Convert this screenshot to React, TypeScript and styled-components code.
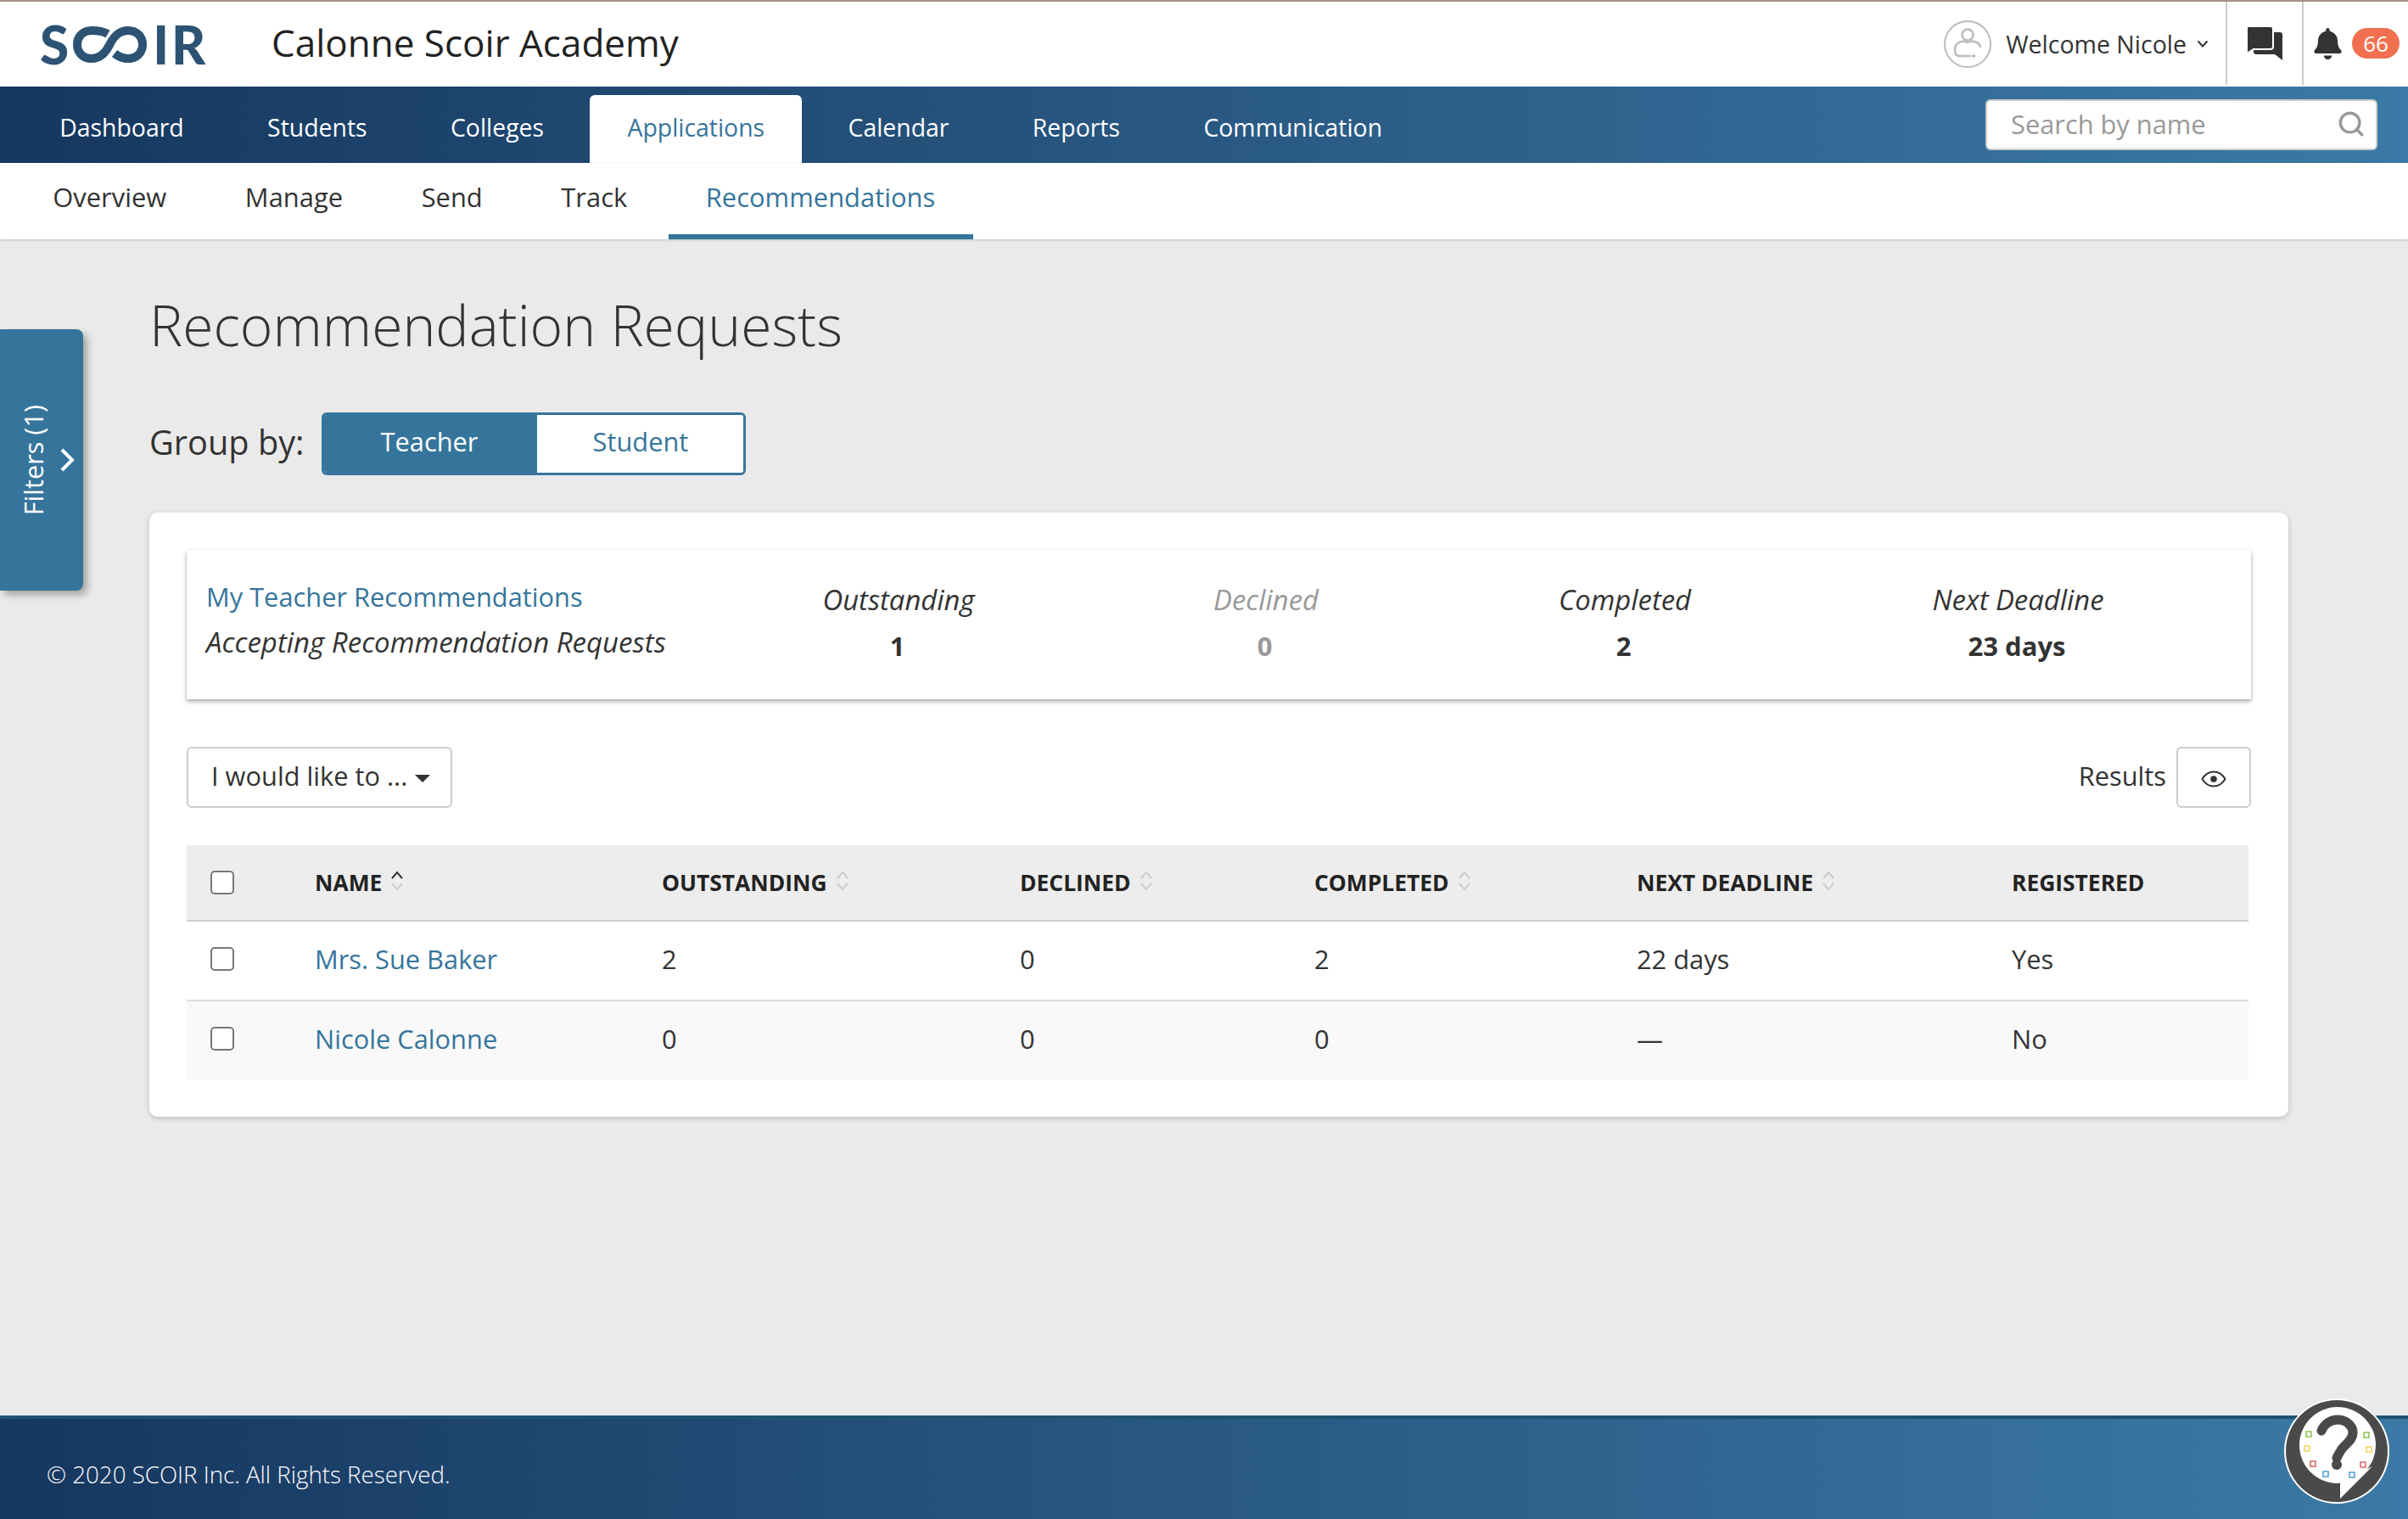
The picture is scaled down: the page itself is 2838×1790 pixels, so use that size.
import React from "react";
import styled, { createGlobalStyle } from "styled-components";
import { FaBell } from "react-icons/fa";
import { Search } from "lucide-react";

const blue = "#36759b";
const ink = "#333";
const tableColumns = "151px 409px 422px 347px 380px 442px 1fr";

const GlobalStyle = createGlobalStyle`
  html, body {
    margin: 0;
    padding: 0;
    background: #eaeaea;
    color: ${ink};
    font-family: "Open Sans", "Noto Sans", sans-serif;
  }
  * {
    box-sizing: border-box;
  }
`;

const Page = styled.div`
  position: relative;
  display: flex;
  flex-direction: column;
  min-height: 1790px;
`;

const TopBar = styled.header`
  display: flex;
  align-items: stretch;
  height: 102px;
  background: #fff;
  border-top: 2px solid #a88f8b;
`;

const Brand = styled.div`
  display: flex;
  align-items: center;
  gap: 2px;
  width: 320px;
  padding-left: 47px;
  color: #2c5374;
  font-family: "Lato", sans-serif;
  font-size: 62px;
  font-weight: 900;
  line-height: 1;
  letter-spacing: 3px;
`;

const BrandInfinity = styled.svg`
  width: 87px;
  height: 43px;
  margin-right: 5px;
`;

const SchoolName = styled.div`
  flex: 1;
  align-self: center;
  padding-bottom: 4px;
  font-size: 44px;
  color: #222;
`;

const UserMenu = styled.div`
  display: flex;
  align-items: center;
  padding-right: 20px;
  font-size: 28.5px;
`;

const AvatarSvg = styled.svg`
  margin-right: 17px;
`;

const ChevronSvg = styled.svg`
  margin-left: 12px;
`;

const IconCell = styled.div`
  display: flex;
  align-items: center;
  height: 98px;
  border-left: 2px solid #ccc;
  padding-left: 22px;
  width: 90px;
`;

const BellCell = styled(IconCell)`
  width: 125px;
  padding-left: 10px;
  gap: 10px;
  font-size: 37px;
`;

const Badge = styled.span`
  display: flex;
  align-items: center;
  justify-content: center;
  width: 56px;
  height: 36px;
  border-radius: 18px;
  background: #f0704f;
  color: #fff;
  font-size: 26px;
`;

const MainNav = styled.nav`
  display: flex;
  align-items: flex-end;
  justify-content: space-between;
  height: 90px;
  padding-left: 21px;
  padding-right: 36px;
  background: linear-gradient(90deg, #16375f 0%, #3b7aa6 100%);
`;

const MainTabs = styled.div`
  display: flex;
  align-items: flex-end;
`;

const MainTab = styled.a<{ $active?: boolean }>`
  display: flex;
  align-items: center;
  height: 80px;
  margin: 0 5px;
  padding: 0 44.2px 5px;
  border-radius: 6px 6px 0 0;
  font-size: 28.4px;
  color: ${(p) => (p.$active ? blue : "#fff")};
  background: ${(p) => (p.$active ? "#fff" : "transparent")};
`;

const SearchBox = styled.div`
  display: flex;
  align-items: center;
  justify-content: space-between;
  align-self: center;
  width: 462px;
  height: 60px;
  padding: 0 12px 2px 28px;
  background: #fff;
  border: 2px solid #ccc;
  border-radius: 6px;
  color: #999;
  font-size: 30.8px;
`;

const SubNav = styled.nav`
  display: flex;
  height: 90px;
  padding-left: 16px;
  background: #fff;
  box-shadow: 0 1px 3px rgba(0, 0, 0, 0.18);
`;

const SubTab = styled.a<{ $active?: boolean }>`
  display: flex;
  align-items: center;
  margin: 0 2px;
  padding: 0 44.3px 10px;
  font-size: 30.9px;
  color: ${(p) => (p.$active ? blue : ink)};
  border-bottom: 6px solid ${(p) => (p.$active ? blue : "transparent")};
  border-top: 6px solid transparent;
`;

const FilterTab = styled.button`
  position: absolute;
  left: 0;
  top: 388px;
  display: flex;
  align-items: center;
  justify-content: flex-start;
  gap: 14px;
  width: 98px;
  height: 308px;
  padding: 0 0 0 22px;
  border: none;
  border-radius: 0 8px 8px 0;
  background: ${blue};
  color: #fff;
  font-family: inherit;
  font-size: 30.7px;
  box-shadow: 5px 5px 8px rgba(0, 0, 0, 0.3);
`;

const FilterLabel = styled.span`
  writing-mode: vertical-rl;
  transform: rotate(180deg);
  line-height: 34px;
`;

const Main = styled.main`
  flex: 1;
  padding: 0 141px 44px 176px;
`;

const Title = styled.h1`
  margin: 53px 0 0;
  font-size: 66px;
  font-weight: 300;
  line-height: 94px;
  color: ${ink};
`;

const GroupRow = styled.div`
  display: flex;
  align-items: center;
  gap: 21px;
  margin-top: 57px;
  font-size: 39.7px;
`;

const GroupLabel = styled.span`
  padding-bottom: 5px;
`;

const Toggle = styled.div`
  display: flex;
  width: 500px;
  height: 74px;
  border: 3px solid ${blue};
  border-radius: 6px;
  overflow: hidden;
  background: #fff;
`;

const ToggleOption = styled.div<{ $active?: boolean }>`
  display: flex;
  align-items: center;
  justify-content: center;
  padding: 0 ${(p) => (p.$active ? "4px" : "0")} 6px 0;
  width: ${(p) => (p.$active ? "251px" : "243px")};
  font-size: 30.8px;
  color: ${(p) => (p.$active ? "#fff" : blue)};
  background: ${(p) => (p.$active ? blue : "#fff")};
`;

const Card = styled.section`
  margin-top: 44px;
  padding: 44px;
  background: #fff;
  border-radius: 10px;
  box-shadow: 0 2px 6px rgba(0, 0, 0, 0.2);
`;

const Summary = styled.div`
  display: grid;
  grid-template-columns: 640px 398px 468px 378px 1fr;
  align-items: center;
  height: 176px;
  box-shadow: 0 3px 5px rgba(0, 0, 0, 0.3), 0 0 3px rgba(0, 0, 0, 0.1);
`;

const SummaryLead = styled.div`
  padding-left: 23px;
  padding-bottom: 13px;
  font-size: 30.8px;
`;

const SummaryLink = styled.div`
  color: ${blue};
  line-height: 54px;
`;

const SummaryNote = styled.div`
  font-style: italic;
  line-height: 54px;
  font-size: 33px;
`;

const Stat = styled.div<{ $muted?: boolean }>`
  padding-bottom: 7px;
  text-align: center;
  color: ${(p) => (p.$muted ? "#999" : ink)};
`;

const StatLabel = styled.div`
  font-size: 32.8px;
  font-style: italic;
  line-height: 56px;
`;

const StatValue = styled.div`
  font-size: 31px;
  font-weight: 700;
  line-height: 52px;
`;

const StatValueText = styled.span`
  margin-right: 3px;
`;

const Toolbar = styled.div`
  display: flex;
  align-items: center;
  justify-content: space-between;
  margin-top: 56px;
`;

const ToolButton = styled.button`
  display: flex;
  align-items: center;
  justify-content: center;
  height: 72px;
  padding: 0 24px 5px 27px;
  background: #fff;
  border: 2px solid #ccc;
  border-radius: 6px;
  color: ${ink};
  font-family: inherit;
  font-size: 30.8px;
`;

const Caret = styled.span`
  display: inline-block;
  margin-left: 9px;
  margin-top: 8px;
  border-left: 9px solid transparent;
  border-right: 9px solid transparent;
  border-top: 9px solid ${ink};
`;

const ResultsGroup = styled.div`
  display: flex;
  align-items: center;
  gap: 12px;
  font-size: 30.8px;
`;

const ResultsText = styled.span`
  padding-bottom: 4px;
`;

const EyeButton = styled(ToolButton)`
  width: 88px;
  padding: 4px 0 0;
`;

const Table = styled.div`
  margin-top: 44px;
  width: 2430px;
`;

const Row = styled.div<{ $shade?: boolean }>`
  display: grid;
  grid-template-columns: ${tableColumns};
  align-items: center;
  height: 94px;
  padding-bottom: 4px;
  border-bottom: 2px solid #ddd;
  font-size: 30.8px;
  background: ${(p) => (p.$shade ? "#f9f9f9" : "#fff")};
  &:last-child {
    height: 92px;
    border-bottom: none;
  }
`;

const HeadRow = styled(Row)`
  height: 90px;
  padding-bottom: 0;
  background: #ededed;
  border-bottom: 2px solid #ccc;
  font-size: 26.4px;
  font-weight: 700;
  color: #222;
`;

const HeadCell = styled.div`
  display: flex;
  align-items: center;
  gap: 10px;
`;

const Box = styled.span`
  display: block;
  width: 28px;
  height: 28px;
  margin-left: 28px;
  background: #fff;
  border: 2px solid #777;
  border-radius: 5px;
`;

const NameLink = styled.a`
  color: ${blue};
`;

const SortSvg = styled.svg`
  width: 16px;
  height: 24px;
  margin-top: -4px;
`;

const Footer = styled.footer`
  display: flex;
  align-items: center;
  height: 122px;
  padding: 12px 0 0 55px;
  border-top: 4px solid #1f5270;
  background: linear-gradient(90deg, #16375f 0%, #3b7aa6 100%);
  color: #fff;
  font-size: 27.7px;
  font-weight: 300;
`;

const HelpButton = styled.svg`
  position: absolute;
  left: 2692px;
  top: 1648px;
  width: 124px;
  height: 124px;
`;

const BrandMark = () => (
  <Brand>
    S
    <BrandInfinity viewBox="0 0 87 43" fill="none">
      <path
        d="M41 9C36 6 28 5 22 5C12 5 5 12 5 21.5C5 31 12 38 22 38C32 38 38 32 43 22C48 12 54 5 65 5C75 5 82 12 82 21.5C82 31 75 38 65 38C59 38 54 36 49 32"
        stroke="#2c5374"
        strokeWidth="10"
      />
    </BrandInfinity>
    IR
  </Brand>
);

const Avatar = () => (
  <AvatarSvg width="56" height="56" viewBox="0 0 56 56" fill="none" stroke="#bbb" strokeWidth="2">
    <circle cx="28" cy="28" r="27" />
    <circle cx="28" cy="17" r="6.5" strokeWidth="2.5" />
    <path
      d="M43 31C42 27 38 25 33 24.5C30 26 26 26 23 24.5C17 25 13 29 13 33C13 38 13 41 18 42H31"
      strokeWidth="2.5"
      strokeLinecap="round"
    />
    <circle cx="35" cy="42" r="1" fill="#bbb" />
  </AvatarSvg>
);

const Chevron = () => (
  <ChevronSvg width="14" height="10" viewBox="0 0 14 10" fill="none" stroke={ink} strokeWidth="2">
    <path d="M1.5 1.5L7 7.5L12.5 1.5" />
  </ChevronSvg>
);

const ChatIcon = () => (
  <svg width="44" height="42" viewBox="0 0 44 42">
    <path
      d="M10 8H40C42 8 43 9 43 11V41L34 34H12C10 34 9 33 9 31V9Z"
      fill={ink}
    />
    <path
      d="M3 1H29C31 1 32 2 32 4V25C32 27 31 28 29 28H9L1 33V3C1 2 2 1 3 1Z"
      fill={ink}
      stroke="#fff"
      strokeWidth="2"
    />
  </svg>
);

const EyeIcon = () => (
  <svg width="30" height="24" viewBox="0 0 30 24" fill="none" stroke={ink} strokeWidth="2">
    <path d="M1.5 12C5 6 10 3.5 15 3.5C20 3.5 25 6 28.5 12C25 18 20 20.5 15 20.5C10 20.5 5 18 1.5 12Z" />
    <circle cx="15" cy="12" r="3.8" fill={ink} stroke="none" />
  </svg>
);

const SortIcon: React.FC<{ active?: boolean }> = ({ active }) => (
  <SortSvg viewBox="0 0 16 24" fill="none" strokeWidth="2">
    <path d="M2 9L8 2L14 9" stroke={active ? "#333" : "#ccc"} />
    <path d="M2 15L8 22L14 15" stroke="#ccc" />
  </SortSvg>
);

const squares = [
  { x: 29, y: 42, c: "#8cc152" },
  { x: 97, y: 43, c: "#8cc152" },
  { x: 27, y: 59, c: "#f6d25a" },
  { x: 100, y: 60, c: "#f6d25a" },
  { x: 34, y: 77, c: "#d9625f" },
  { x: 93, y: 78, c: "#d9625f" },
  { x: 49, y: 89, c: "#4f9fd6" },
  { x: 80, y: 90, c: "#4f9fd6" },
];

const HelpBadge = () => (
  <HelpButton viewBox="0 0 124 124">
    <circle cx="62" cy="62" r="62" fill="#fff" />
    <circle cx="62" cy="62" r="60" fill="#4a4a4a" />
    <circle cx="63" cy="55" r="45" fill="#fff" />
    <path d="M66 100V118L104 80Z" fill="#fff" />
    <path
      d="M44 38C47 30 55 25 63 25C73 25 81 32 81 40C81 50 71 54 67 61C65 64 64 66 62 70"
      fill="none"
      stroke="#4a4a4a"
      strokeWidth="11"
      strokeLinecap="round"
    />
    <circle cx="62" cy="78" r="6" fill="#4a4a4a" />
    {squares.map((s) => (
      <rect
        key={`${s.x}-${s.y}`}
        x={s.x - 3}
        y={s.y - 3}
        width="6"
        height="6"
        fill="#fff"
        stroke={s.c}
        strokeWidth="1.5"
      />
    ))}
  </HelpButton>
);

const mainTabs = ["Dashboard", "Students", "Colleges", "Applications", "Calendar", "Reports", "Communication"];
const subTabs = ["Overview", "Manage", "Send", "Track", "Recommendations"];
const stats = [
  { label: "Outstanding", value: "1" },
  { label: "Declined", value: "0", muted: true },
  { label: "Completed", value: "2" },
  { label: "Next Deadline", value: "23 days" },
];
const heads = [
  { label: "NAME", sort: true, active: true },
  { label: "OUTSTANDING", sort: true },
  { label: "DECLINED", sort: true },
  { label: "COMPLETED", sort: true },
  { label: "NEXT DEADLINE", sort: true },
  { label: "REGISTERED" },
];
const rows = [
  { name: "Mrs. Sue Baker", cells: ["2", "0", "2", "22 days", "Yes"] },
  { name: "Nicole Calonne", cells: ["0", "0", "0", "—", "No"], shade: true },
];

export default function App() {
  return (
    <Page>
      <GlobalStyle />
      <TopBar>
        <BrandMark />
        <SchoolName>Calonne Scoir Academy</SchoolName>
        <UserMenu>
          <Avatar />
          <span>Welcome Nicole</span>
          <Chevron />
        </UserMenu>
        <IconCell>
          <ChatIcon />
        </IconCell>
        <BellCell>
          <FaBell color={ink} />
          <Badge>66</Badge>
        </BellCell>
      </TopBar>
      <MainNav>
        <MainTabs>
          {mainTabs.map((t) => (
            <MainTab key={t} $active={t === "Applications"}>
              {t}
            </MainTab>
          ))}
        </MainTabs>
        <SearchBox>
          Search by name
          <Search size={34} strokeWidth={2.4} color="#999" />
        </SearchBox>
      </MainNav>
      <SubNav>
        {subTabs.map((t) => (
          <SubTab key={t} $active={t === "Recommendations"}>
            {t}
          </SubTab>
        ))}
      </SubNav>
      <FilterTab>
        <FilterLabel>Filters (1)</FilterLabel>
        <svg width="18" height="28" viewBox="0 0 18 28" fill="none" stroke="#fff" strokeWidth="4">
          <path d="M3 2L15 14L3 26" />
        </svg>
      </FilterTab>
      <Main>
        <Title>Recommendation Requests</Title>
        <GroupRow>
          <GroupLabel>Group by:</GroupLabel>
          <Toggle>
            <ToggleOption $active>Teacher</ToggleOption>
            <ToggleOption>Student</ToggleOption>
          </Toggle>
        </GroupRow>
        <Card>
          <Summary>
            <SummaryLead>
              <SummaryLink>My Teacher Recommendations</SummaryLink>
              <SummaryNote>Accepting Recommendation Requests</SummaryNote>
            </SummaryLead>
            {stats.map((s) => (
              <Stat key={s.label} $muted={s.muted}>
                <StatLabel>{s.label}</StatLabel>
                <StatValue>
                  <StatValueText>{s.value}</StatValueText>
                </StatValue>
              </Stat>
            ))}
          </Summary>
          <Toolbar>
            <ToolButton>
              I would like to ...
              <Caret />
            </ToolButton>
            <ResultsGroup>
              <ResultsText>Results</ResultsText>
              <EyeButton>
                <EyeIcon />
              </EyeButton>
            </ResultsGroup>
          </Toolbar>
          <Table>
            <HeadRow>
              <Box />
              {heads.map((h) => (
                <HeadCell key={h.label}>
                  {h.label}
                  {h.sort && <SortIcon active={h.active} />}
                </HeadCell>
              ))}
            </HeadRow>
            {rows.map((r) => (
              <Row key={r.name} $shade={r.shade}>
                <Box />
                <NameLink>{r.name}</NameLink>
                {r.cells.map((c, i) => (
                  <div key={i}>{c}</div>
                ))}
              </Row>
            ))}
          </Table>
        </Card>
      </Main>
      <Footer>© 2020 SCOIR Inc. All Rights Reserved.</Footer>
      <HelpBadge />
    </Page>
  );
}
